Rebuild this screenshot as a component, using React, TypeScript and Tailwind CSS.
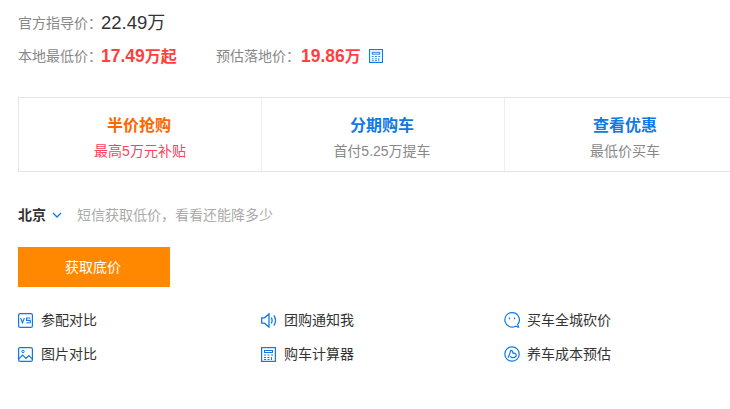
const F = '[font-family:"Liberation_Sans","Noto_Sans_CJK_SC",sans-serif]';

function Calc({ c = "w-[15px] h-[15px]" }: { c?: string }) {
  return (
    <svg className={c} viewBox="0 0 15 15" fill="none" stroke="#0f7ae5" strokeWidth="1.2">
      <rect x="0.6" y="0.6" width="13.8" height="13.8" />
      <rect x="3.5" y="3.5" width="8" height="2" strokeWidth="1" />
      <path strokeWidth="1" d="M3 8h2M6.5 8h2M10 8h2M3 10.5h2M6.5 10.5h2M3 12.5h2M6.5 12.5h2M10.5 10v3" />
    </svg>
  );
}
function VS() {
  return (
    <svg className="w-[15px] h-[15px]" viewBox="0 0 15 15" fill="none" stroke="#0f7ae5" strokeWidth="1.2">
      <rect x="0.6" y="0.6" width="13.8" height="13.8" rx="1.5" />
      <path strokeWidth="1.1" d="M2.6 5l1.9 4.8L6.4 5M12.4 5H8.6v2.4h3.6v2.4H8.4" />
    </svg>
  );
}
function Pic() {
  return (
    <svg className="w-[15px] h-[15px]" viewBox="0 0 15 15" fill="none" stroke="#0f7ae5" strokeWidth="1.2">
      <rect x="0.6" y="0.6" width="13.8" height="13.8" rx="1.5" />
      <circle cx="5" cy="4.5" r="1.2" strokeWidth="1" />
      <path d="M0.6 12.2L4.6 8l3.4 3.4 2.8-2.8 3.6 3.6" />
    </svg>
  );
}
function Speaker() {
  return (
    <svg className="w-[16px] h-[15px]" viewBox="0 0 16 15" fill="none" stroke="#0f7ae5" strokeWidth="1.3">
      <path d="M0.7 4.8h2.8L8 0.9v13.2L3.5 10.2H0.7z" />
      <path d="M10.3 4.6c1 1.8 1 4 0 5.8M12.9 2.4c2 3.1 2 7.1 0 10.2" />
    </svg>
  );
}
function Chat() {
  return (
    <svg className="w-[16px] h-[16px]" viewBox="0 0 16 16" fill="none" stroke="#0f7ae5" strokeWidth="1.2">
      <path d="M8 0.7a7.2 7.2 0 1 0 3.5 13.5l3 1-.8-2.7A7.2 7.2 0 0 0 8 .7z" />
      <path d="M5.5 5.5v1.8M10.5 5.5v1.8" />
    </svg>
  );
}
function Cost() {
  return (
    <svg className="w-[16px] h-[16px]" viewBox="0 0 16 16" fill="none" stroke="#0f7ae5" strokeWidth="1.2">
      <circle cx="8" cy="8" r="7.2" />
      <path d="M3.8 11.5c1.4-1 2-3.8 2.7-6.3.3-1 1.4-1 1.9 0l.8 2.2c1.6-.6 3 .4 3 1.7 0 1.4-1.3 2.5-3.2 2.5-1.5 0-2.4-.6-2.4-1.6" />
    </svg>
  );
}

function Cell({ t, s, tc, sc, first }: { t: string; s: string; tc: string; sc: string; first?: boolean }) {
  return (
    <div className={`shrink-0 flex flex-col items-center ${first ? "w-[242px]" : "w-[243px] border-l border-[#eeeeee]"}`}>
      <div className={`text-[16px] font-bold leading-[22px] mt-[17px] pr-[2px] ${tc}`}>{t}</div>
      <div className={`text-[14px] leading-[18px] mt-[5px] ${first ? "" : "pr-[2px]"} ${sc}`}>{s}</div>
    </div>
  );
}

function Link({ icon, label, w }: { icon: React.ReactNode; label: string; w: string }) {
  return (
    <div className={`flex items-center h-[34px] ${w}`}>
      <div className="w-[23px] flex items-center">{icon}</div>
      <span className="text-[14px] text-[#333333]">{label}</span>
    </div>
  );
}

export default function App() {
  return (
    <div className={`w-[730px] h-[409px] overflow-hidden bg-white pl-[18px] pt-[10px] ${F}`}>
      <div className="flex items-center h-[26px]">
        <span className="text-[14px] text-[#888888] w-[83px] whitespace-nowrap">官方指导价{"\uFF1A"}</span>
        <span className="text-[18px] text-[#333333]"><span className="text-[18.5px]">22.49</span>万</span>
      </div>
      <div className="flex items-center h-[26px] mt-[7px]">
        <span className="text-[14px] text-[#888888] w-[83px] whitespace-nowrap">本地最低价{"\uFF1A"}</span>
        <span className="text-[16px] font-bold text-[#ff4040] w-[115px]"><span className="text-[17.5px]">17.49</span>万起</span>
        <span className="text-[14px] text-[#888888] w-[85px] whitespace-nowrap">预估落地价{"\uFF1A"}</span>
        <span className="text-[16px] font-bold text-[#ff4040] w-[68px]"><span className="text-[17.5px]">19.86</span>万</span>
        <Calc c="w-[14px] h-[14px]" />
      </div>
      <div className="flex h-[75px] w-[730px] mt-[28px] border border-[#e5e5e5]">
        <Cell first t="半价抢购" s="最高5万元补贴" tc="text-[#ff6600]" sc="text-[#ff4060]" />
        <Cell t="分期购车" s="首付5.25万提车" tc="text-[#0f7ae5]" sc="text-[#888888]" />
        <Cell t="查看优惠" s="最低价买车" tc="text-[#0f7ae5]" sc="text-[#888888]" />
      </div>
      <div className="flex items-center h-[20px] mt-[33px]">
        <span className="text-[14px] font-bold text-[#333333]">北京</span>
        <svg className="w-[10px] h-[6px] ml-[6px]" viewBox="0 0 10 6" fill="none" stroke="#0f7ae5" strokeWidth="1.3">
          <path d="M1 1l4 4 4-4" />
        </svg>
        <span className="text-[14px] text-[#aaaaaa] ml-[15px]">短信获取低价{"\uFF0C"}看看还能降多少</span>
      </div>
      <button className="block w-[152px] h-[40px] mt-[22px] pr-[2px] bg-[#ff8800] text-white text-[14px]">获取底价</button>
      <div className="mt-[16px]">
        <div className="flex">
          <Link w="w-[243px]" icon={<VS />} label="参配对比" />
          <Link w="w-[243px]" icon={<Speaker />} label="团购通知我" />
          <Link w="w-[200px]" icon={<Chat />} label="买车全城砍价" />
        </div>
        <div className="flex">
          <Link w="w-[243px]" icon={<Pic />} label="图片对比" />
          <Link w="w-[243px]" icon={<Calc />} label="购车计算器" />
          <Link w="w-[200px]" icon={<Cost />} label="养车成本预估" />
        </div>
      </div>
    </div>
  );
}
